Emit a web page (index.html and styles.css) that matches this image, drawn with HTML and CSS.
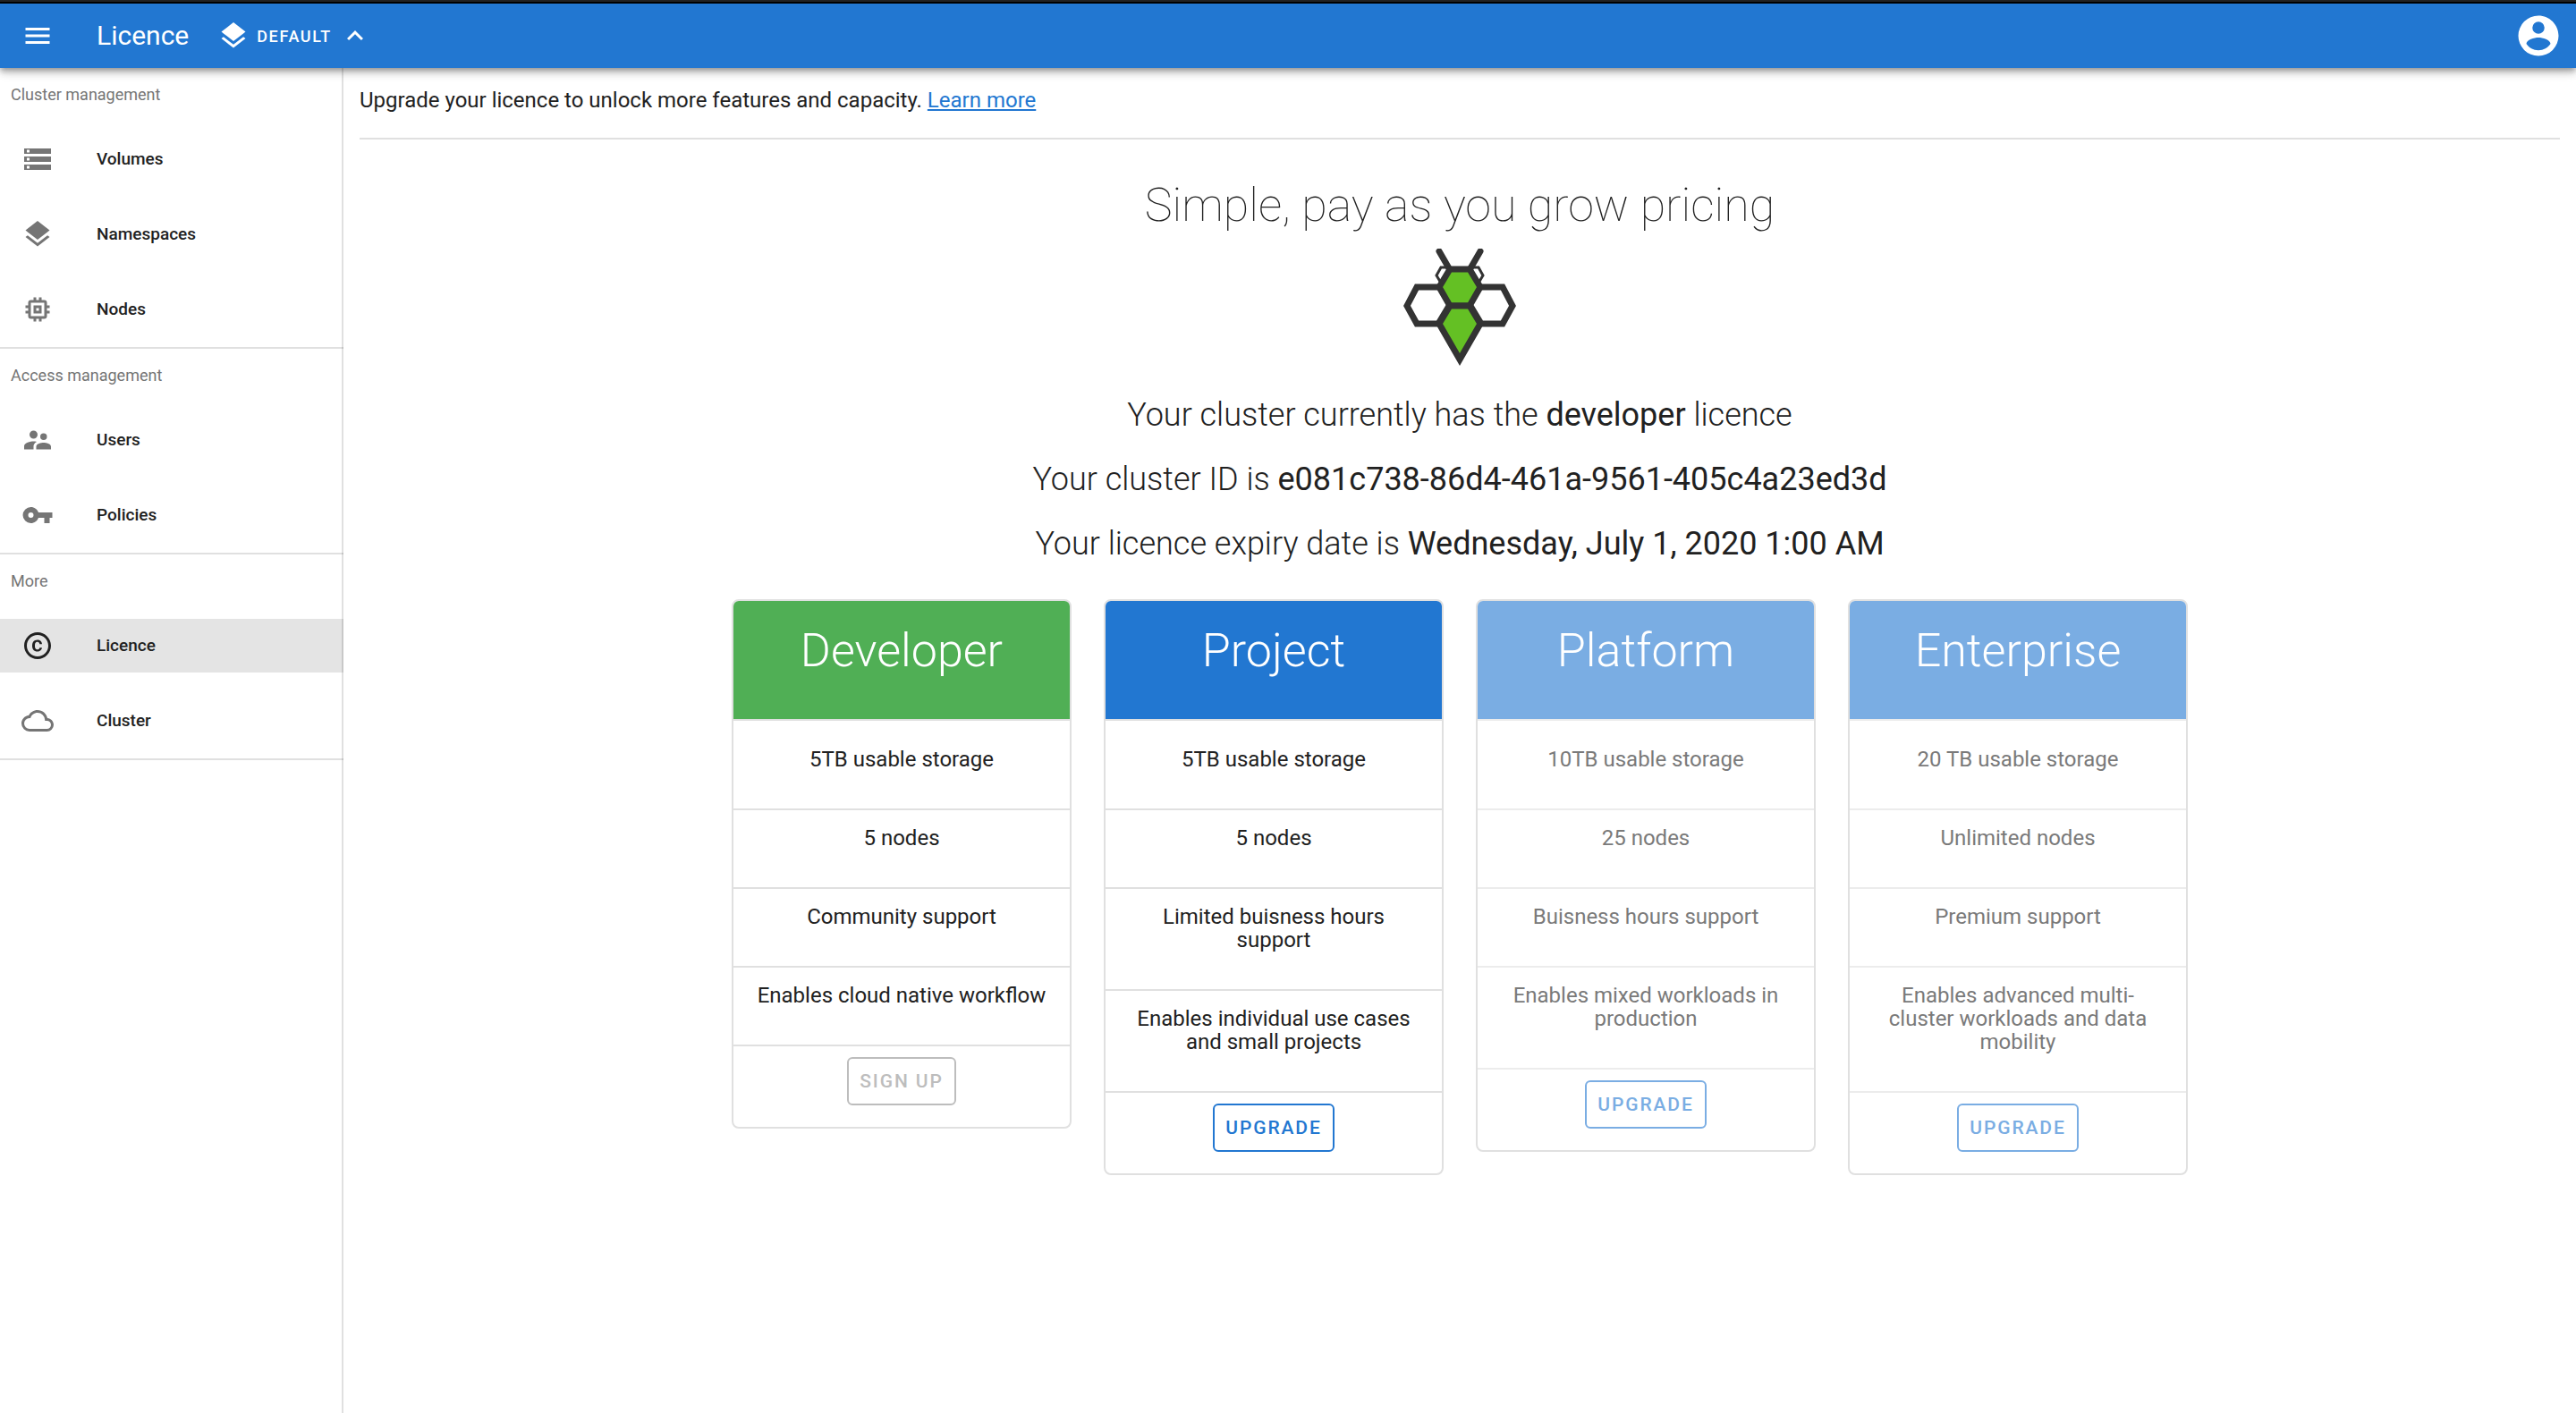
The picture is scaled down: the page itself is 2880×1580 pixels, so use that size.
FILE: index.html
```html
<!DOCTYPE html>
<html lang="en">
<head>
<meta charset="utf-8">
<title>Licence</title>
<meta name="viewport" content="width=device-width, initial-scale=1">
<link rel="stylesheet" href="styles.css">
</head>
<body>
<header class="app-bar">
  <button class="icon-button" type="button" aria-label="Toggle menu">
    <svg class="icon" viewBox="0 0 24 24"><path d="M3,6H21V8H3V6M3,11H21V13H3V11M3,16H21V18H3V16Z"/></svg>
  </button>
  <h1 class="app-title">Licence</h1>
  <button class="namespace-button" type="button">
    <svg class="icon" viewBox="0 0 24 24"><path d="M12,16L19.36,10.27L21,9L12,2L3,9L4.63,10.27M12,18.54L4.62,12.81L3,14.07L12,21.07L21,14.07L19.37,12.8L12,18.54Z"/></svg>
    <span>DEFAULT</span>
    <svg class="icon" viewBox="0 0 24 24"><path d="M7.41,15.41L12,10.83L16.59,15.41L18,14L12,8L6,14L7.41,15.41Z"/></svg>
  </button>
  <button class="icon-button account" type="button" aria-label="Account">
    <svg class="icon icon-large" viewBox="0 0 24 24"><path d="M12,19.2C9.5,19.2 7.29,17.92 6,16C6.03,14 10,12.9 12,12.9C14,12.9 17.97,14 18,16C16.71,17.92 14.5,19.2 12,19.2M12,5A3,3 0 0,1 15,8A3,3 0 0,1 12,11A3,3 0 0,1 9,8A3,3 0 0,1 12,5M12,2A10,10 0 0,0 2,12A10,10 0 0,0 12,22A10,10 0 0,0 22,12C22,6.47 17.5,2 12,2Z"/></svg>
  </button>
</header>
<div class="layout">
  <nav class="sidebar" aria-label="Main">
    <section class="nav-section">
      <h2 class="nav-heading">Cluster management</h2>
      <a class="nav-item" href="#volumes">
        <svg class="icon" viewBox="0 0 24 24"><path d="M2,20H22V16H2V20M4,17H6V19H4V17M2,4V8H22V4H2M6,7H4V5H6V7M2,14H22V10H2V14M4,11H6V13H4V11Z"/></svg>
        <span>Volumes</span>
      </a>
      <a class="nav-item" href="#namespaces">
        <svg class="icon" viewBox="0 0 24 24"><path d="M12,16L19.36,10.27L21,9L12,2L3,9L4.63,10.27M12,18.54L4.62,12.81L3,14.07L12,21.07L21,14.07L19.37,12.8L12,18.54Z"/></svg>
        <span>Namespaces</span>
      </a>
      <a class="nav-item" href="#nodes">
        <svg class="icon" viewBox="0 0 24 24"><path d="M15,9H9V15H15V9M13,13H11V11H13V13M21,11V9H19V7A2,2 0 0,0 17,5H15V3H13V5H11V3H9V5H7A2,2 0 0,0 5,7V9H3V11H5V13H3V15H5V17A2,2 0 0,0 7,19H9V21H11V19H13V21H15V19H17A2,2 0 0,0 19,17V15H21V13H19V11H21M17,17H7V7H17V17Z"/></svg>
        <span>Nodes</span>
      </a>
    </section>
    <section class="nav-section">
      <h2 class="nav-heading">Access management</h2>
      <a class="nav-item" href="#users">
        <svg class="icon" viewBox="0 0 24 24"><path d="M16.5,12A2.5,2.5 0 0,0 19,9.5A2.5,2.5 0 0,0 16.5,7A2.5,2.5 0 0,0 14,9.5A2.5,2.5 0 0,0 16.5,12M9,11A3,3 0 0,0 12,8A3,3 0 0,0 9,5A3,3 0 0,0 6,8A3,3 0 0,0 9,11M16.5,14C14.67,14 11,14.92 11,16.75V19H22V16.75C22,14.92 18.33,14 16.5,14M9,13C6.67,13 2,14.17 2,16.5V19H9V16.75C9,15.9 9.33,14.41 11.37,13.28C10.5,13.1 9.66,13 9,13Z"/></svg>
        <span>Users</span>
      </a>
      <a class="nav-item" href="#policies">
        <svg class="icon" viewBox="0 0 24 24"><path d="M7,14A2,2 0 0,1 5,12A2,2 0 0,1 7,10A2,2 0 0,1 9,12A2,2 0 0,1 7,14M12.65,10C11.83,7.67 9.61,6 7,6A6,6 0 0,0 1,12A6,6 0 0,0 7,18C9.61,18 11.83,16.33 12.65,14H17V18H21V14H23V10H12.65Z"/></svg>
        <span>Policies</span>
      </a>
    </section>
    <section class="nav-section">
      <h2 class="nav-heading">More</h2>
      <a class="nav-item nav-item-active" href="#licence" aria-current="page">
        <svg class="icon" viewBox="0 0 24 24"><path d="M10.08,10.86C10.13,10.53 10.24,10.24 10.38,10C10.5,9.74 10.72,9.53 10.97,9.37C11.21,9.22 11.5,9.15 11.88,9.14C12.11,9.15 12.32,9.19 12.5,9.27C12.71,9.36 12.89,9.5 13.03,9.63C13.17,9.78 13.28,9.96 13.37,10.16C13.46,10.36 13.5,10.58 13.5,10.8H15.3C15.28,10.33 15.19,9.9 15,9.5C14.85,9.12 14.62,8.78 14.32,8.5C14,8.22 13.66,8 13.24,7.84C12.82,7.68 12.36,7.61 11.85,7.61C11.2,7.61 10.63,7.72 10.15,7.95C9.67,8.18 9.27,8.5 8.95,8.87C8.63,9.26 8.39,9.71 8.24,10.23C8.09,10.75 8,11.29 8,11.87V12.14C8,12.72 8.08,13.26 8.23,13.78C8.38,14.3 8.62,14.75 8.94,15.13C9.26,15.5 9.66,15.82 10.14,16.04C10.62,16.26 11.19,16.38 11.84,16.38C12.31,16.38 12.75,16.3 13.16,16.15C13.57,16 13.93,15.79 14.24,15.5C14.55,15.25 14.8,14.94 15,14.58C15.16,14.22 15.27,13.84 15.28,13.43H13.5C13.5,13.64 13.43,13.83 13.34,14C13.25,14.19 13.13,14.34 13,14.47C12.83,14.6 12.66,14.7 12.46,14.77C12.27,14.84 12.07,14.86 11.86,14.87C11.5,14.86 11.2,14.79 10.97,14.64C10.72,14.5 10.5,14.27 10.38,14C10.24,13.77 10.13,13.47 10.08,13.14C10.03,12.81 10,12.47 10,12.14V11.87C10,11.5 10.03,11.19 10.08,10.86M12,2C6.5,2 2,6.5 2,12C2,17.5 6.5,22 12,22C17.5,22 22,17.5 22,12C22,6.5 17.5,2 12,2M12,20C7.59,20 4,16.41 4,12C4,7.59 7.59,4 12,4C16.41,4 20,7.59 20,12C20,16.41 16.41,20 12,20Z"/></svg>
        <span>Licence</span>
      </a>
      <a class="nav-item" href="#cluster">
        <svg class="icon" viewBox="0 0 24 24"><path d="M19,18H6A4,4 0 0,1 2,14A4,4 0 0,1 6,10H6.71C7.37,7.69 9.5,6 12,6A5.5,5.5 0 0,1 17.5,11.5V12H19A3,3 0 0,1 22,15A3,3 0 0,1 19,18M19.35,10.03C18.67,6.59 15.64,4 12,4C9.11,4 6.6,5.64 5.35,8.03C2.34,8.36 0,10.9 0,14A6,6 0 0,0 6,20H19A5,5 0 0,0 24,15C24,12.36 21.95,10.22 19.35,10.03Z"/></svg>
        <span>Cluster</span>
      </a>
    </section>
  </nav>
  <main class="content">
    <p class="notice">Upgrade your licence to unlock more features and capacity. <a href="#learn-more">Learn more</a></p>
    <section class="summary">
      <h2 class="summary-title">Simple, pay as you grow pricing</h2>
      <svg class="bee" viewBox="0 0 128 136" aria-hidden="true">
        <g fill="none" stroke="#333" stroke-width="7">
          <path d="M54 21H43L38 30 44 40M74 21H85L90 30 84 40" stroke-width="3"/>
          <path d="M41 3 52 22M87 3 76 22" stroke-linecap="round"/>
          <path d="M52 64 40 84H16L5 64 16 43H41M76 64 88 84H112L123 64 112 43H87"/>
          <path d="M53 23H75L87 43 75 64H53L41 43Z" fill="#64c024"/>
          <path d="M53 64H75L87 84 64 124 41 84Z" fill="#64c024"/>
        </g>
      </svg>
      <p class="summary-line">Your cluster currently has the <b>developer</b> licence</p>
      <p class="summary-line">Your cluster ID is <b>e081c738-86d4-461a-9561-405c4a23ed3d</b></p>
      <p class="summary-line">Your licence expiry date is <b>Wednesday, July 1, 2020 1:00 AM</b></p>
    </section>
    <section class="plans">
      <article class="plan plan-current">
        <h3 class="plan-name">Developer</h3>
        <ul class="plan-features">
          <li>5TB usable storage</li>
          <li>5 nodes</li>
          <li>Community support</li>
          <li>Enables cloud native workflow</li>
        </ul>
        <div class="plan-actions"><button class="plan-button" type="button" disabled>SIGN UP</button></div>
      </article>
      <article class="plan">
        <h3 class="plan-name">Project</h3>
        <ul class="plan-features">
          <li>5TB usable storage</li>
          <li>5 nodes</li>
          <li>Limited buisness hours support</li>
          <li>Enables individual use cases and small projects</li>
        </ul>
        <div class="plan-actions"><button class="plan-button" type="button">UPGRADE</button></div>
      </article>
      <article class="plan plan-muted">
        <h3 class="plan-name">Platform</h3>
        <ul class="plan-features">
          <li>10TB usable storage</li>
          <li>25 nodes</li>
          <li>Buisness hours support</li>
          <li>Enables mixed workloads in production</li>
        </ul>
        <div class="plan-actions"><button class="plan-button" type="button">UPGRADE</button></div>
      </article>
      <article class="plan plan-muted">
        <h3 class="plan-name">Enterprise</h3>
        <ul class="plan-features">
          <li>20 TB usable storage</li>
          <li>Unlimited nodes</li>
          <li>Premium support</li>
          <li>Enables advanced multi-cluster workloads and data mobility</li>
        </ul>
        <div class="plan-actions"><button class="plan-button" type="button">UPGRADE</button></div>
      </article>
    </section>
  </main>
</div>
</body>
</html>
```
FILE: styles.css
```css
:root {
  --primary: #2277d1;
  --success: #50af55;
  --text: #212121;
  --muted: #757575;
  --line: #e0e0e0;
}

*, *::before, *::after { box-sizing: border-box; }

body {
  margin: 0;
  min-height: 100vh;
  display: flex;
  flex-direction: column;
  background: #fff;
  color: var(--text);
  font-family: Roboto, "Liberation Sans", sans-serif;
  font-size: 24px;
  line-height: 36px;
}

h1, h2, h3, p, ul { margin: 0; padding: 0; font-weight: 400; }
ul { list-style: none; }
button { font-family: inherit; cursor: pointer; }

.icon { width: 36px; height: 36px; fill: currentColor; flex: none; display: block; }
.icon-large { width: 54px; height: 54px; }

.app-bar {
  position: relative;
  z-index: 1;
  display: flex;
  align-items: center;
  height: 76px;
  padding: 0 15px 0 24px;
  border-top: 4px solid #000;
  background: var(--primary);
  color: #fff;
  box-shadow: 0 3px 6px -1px rgba(0, 0, 0, .3), 0 6px 8px rgba(0, 0, 0, .14), 0 2px 15px rgba(0, 0, 0, .12);
}
.app-bar::before {
  content: "";
  position: absolute;
  inset: -4px 0 auto;
  height: 2px;
  background: #222;
}
.icon-button { padding: 0; border: 0; background: none; color: inherit; }
.app-title { margin-left: 48px; font-size: 30px; }
.namespace-button {
  display: flex;
  align-items: center;
  gap: 8px;
  margin-left: 32px;
  padding: 0;
  border: 0;
  background: none;
  color: inherit;
  font-size: 18px;
  font-weight: 500;
  letter-spacing: .09em;
}
.account { margin-left: auto; }

.layout { flex: 1; display: flex; }

.sidebar { position: relative; flex: none; width: 384px; }
/* translucent edge, so the active item and the dividers show through it */
.sidebar::after {
  content: "";
  position: absolute;
  inset: 0 0 0 auto;
  width: 2px;
  background: rgba(0, 0, 0, .12);
}
.nav-section { padding-bottom: 12px; border-bottom: 2px solid var(--line); }
.nav-heading { padding: 0 12px; font-size: 18px; line-height: 60px; color: var(--muted); }
.nav-item {
  display: flex;
  align-items: center;
  gap: 48px;
  height: 60px;
  margin-top: 12px;
  padding: 0 24px;
  color: var(--text);
  font-size: 19px;
  font-weight: 500;
  text-decoration: none;
}
.nav-item + .nav-item { margin-top: 24px; }
.nav-item .icon { color: var(--muted); }
.nav-item-active { background: #e4e4e4; }
.nav-item-active .icon { color: var(--text); }

.content { flex: 1; min-width: 0; padding: 18px; }
.notice { padding-bottom: 24px; border-bottom: 2px solid var(--line); }
.notice a { color: var(--primary); }

.summary { display: flex; flex-direction: column; align-items: center; padding-top: 44px; text-align: center; }
.summary-title { font-size: 52px; font-weight: 100; line-height: 60px; }
.bee { width: 128px; height: 136px; margin: 18px 0 26px; }
.summary-line { margin-bottom: 24px; font-size: 36px; font-weight: 300; line-height: 48px; }
.summary-line b { font-weight: 400; }

.plans { display: flex; flex-wrap: wrap; justify-content: center; align-items: flex-start; gap: 36px; padding-top: 14px; }
.plan {
  width: 380px;
  overflow: hidden;
  border: 2px solid var(--line);
  border-radius: 8px;
  text-align: center;
}
.plan-name {
  height: 132px;
  padding-top: 26px;
  background: var(--primary);
  color: #fff;
  font-size: 52px;
  font-weight: 300;
  line-height: 60px;
}
.plan-current .plan-name { background: var(--success); }
.plan-features { border-top: 2px solid var(--line); padding-top: 12px; }
.plan-features li { padding: 18px 24px 42px; border-bottom: 2px solid var(--line); line-height: 26px; }
.plan-actions { padding: 12px 24px 24px; }
.plan-button {
  height: 54px;
  padding: 0 12px;
  border: 2px solid currentColor;
  border-radius: 6px;
  background: none;
  color: var(--primary);
  font-size: 21px;
  font-weight: 500;
  letter-spacing: .09em;
}
.plan-button:disabled { color: #bdbdbd; cursor: default; }
.plan-muted .plan-name { background: #7aade3; }
.plan-muted .plan-features { color: #7a7a7a; }
.plan-muted .plan-features, .plan-muted li { border-color: #ececec; }
.plan-muted .plan-button { color: #7aade3; }
```
